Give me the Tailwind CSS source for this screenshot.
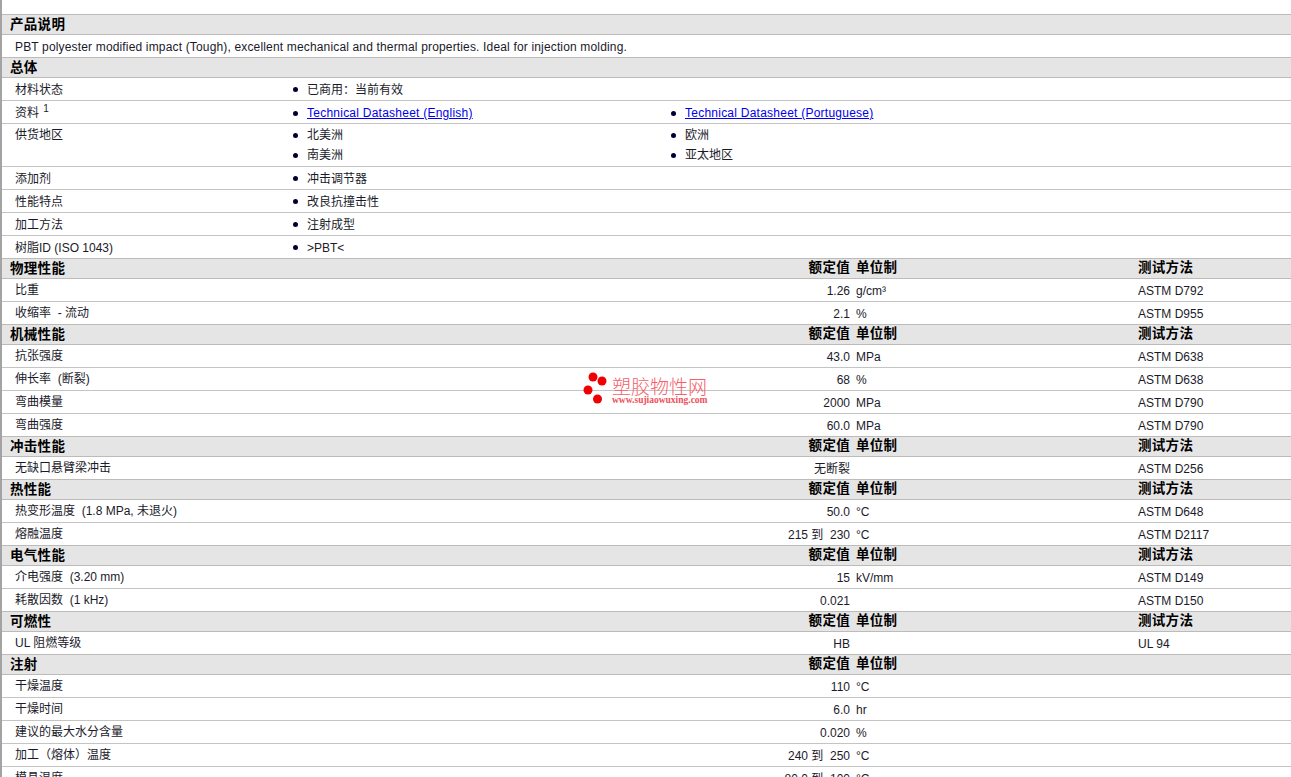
<!DOCTYPE html>
<html lang="zh-CN">
<head>
    <meta charset="UTF-8">
    <script src="https://cdn.jsdelivr.net/npm/@tailwindcss/browser@4"></script>
    <title>产品说明</title>
</head>
<body class="bg-white h-[777px] overflow-hidden relative font-['Liberation_Sans','Noto_Sans_CJK_SC',sans-serif] text-[12px] text-[#1a1a2a]">
    <div id="sheet" class="border-l-2 border-[#a3a3a3] pt-[14px] min-h-[777px]"></div>

    <!-- Watermark -->
    <div class="absolute left-[583px] top-[371px] flex gap-[3px] pointer-events-none">
        <svg width="26" height="34" viewBox="0 0 26 34" class="shrink-0">
            <circle cx="10" cy="6" r="4.5" fill="#f00000"/>
            <circle cx="19" cy="10" r="4.5" fill="#f00000"/>
            <circle cx="5" cy="19" r="4.5" fill="#f00000"/>
            <circle cx="14.5" cy="28" r="4.5" fill="#f00000"/>
        </svg>
        <div class="flex flex-col items-start pt-[5px]">
            <div class="text-[19px] leading-[20px] text-[#f4616a] font-['Noto_Sans_CJK_SC',sans-serif] font-light whitespace-nowrap">塑胶物性网</div>
            <div class="text-[9.5px] leading-[9px] font-bold text-[#f0505a] font-['Liberation_Serif',serif] whitespace-nowrap">www.sujiaowuxing.com</div>
        </div>
    </div>

    <script>
        const TEST = '测试方法';

        // Section header with the grey band
        const head = (title, value, test) => `
            <div class="flex h-[21px] bg-[#e6e5e5] border-t border-b border-[#bdbaba] -mb-px text-[13.5px] tracking-[0.3px] leading-[20px] font-bold text-black">
                <div class="w-[848px] flex justify-between pl-[8px] shrink-0">
                    <span>${title}</span><span class="leading-[18px] ${value ? '' : 'hidden'}">额定值</span>
                </div>
                <div class="w-[288px] pl-[6px] shrink-0 leading-[18px] ${value ? '' : 'hidden'}">单位制</div>
                <div class="leading-[18px] ${test ? '' : 'hidden'}">${TEST}</div>
            </div>`;

        // Plain property row with a value, unit and test method
        const row = (label, value, unit = '', test = '') => `
            <div class="flex h-[23px] border-b border-[#c4c4c4] box-content -mb-px leading-[24px]">
                <div class="w-[848px] flex justify-between pl-[13px] shrink-0">
                    <span>${label}</span><span class="pt-[1px]">${value}</span>
                </div>
                <div class="w-[288px] pl-[6px] shrink-0 pt-[1px]">${unit}</div>
                <div class="pt-[1px]">${test}</div>
            </div>`;

        // Row of bulleted items, up to two columns
        const info = (label, items, pad = 'pt-[2px]') => `
            <div class="flex h-[23px] border-b border-[#c4c4c4] box-content -mb-px">
                <div class="w-[276px] pl-[13px] shrink-0 leading-[26px]">${label}</div>
                <div class="flex items-center w-[378px] shrink-0 pl-[15px] ${pad}"><span class="w-[5px] h-[5px] rounded-full bg-[#000033] mr-[9px]"></span>${items[0]}</div>
                ${items[1] ? `<div class="flex items-center pl-[15px] ${pad}"><span class="w-[5px] h-[5px] rounded-full bg-[#000033] mr-[9px]"></span>${items[1]}</div>` : ''}
            </div>`;

        const link = (text) => `<a href="#" class="text-[#0000ee] underline tracking-[0.24px]">${text}</a>`;

        const area = `
            <div class="flex h-[43px] border-b border-[#c4c4c4] box-content -mb-px leading-[20px]">
                <div class="w-[276px] pl-[13px] pt-[2px] shrink-0">供货地区</div>
                <div class="w-[378px] shrink-0 pl-[15px] pt-[2px]">
                    <div class="flex items-center"><span class="w-[5px] h-[5px] rounded-full bg-[#000033] mr-[9px]"></span>北美洲</div>
                    <div class="flex items-center"><span class="w-[5px] h-[5px] rounded-full bg-[#000033] mr-[9px]"></span>南美洲</div>
                </div>
                <div class="pl-[15px] pt-[2px]">
                    <div class="flex items-center"><span class="w-[5px] h-[5px] rounded-full bg-[#000033] mr-[9px]"></span>欧洲</div>
                    <div class="flex items-center"><span class="w-[5px] h-[5px] rounded-full bg-[#000033] mr-[9px]"></span>亚太地区</div>
                </div>
            </div>`;

        document.getElementById('sheet').innerHTML = [
            head('产品说明'),
            `<div class="h-[23px] border-b border-[#c4c4c4] box-content -mb-px pl-[13px] leading-[26px] tracking-[0.16px]">PBT polyester modified impact (Tough), excellent mechanical and thermal properties. Ideal for injection molding.</div>`,
            head('总体'),
            info('材料状态', ['已商用：当前有效']),
            info('资料 <sup class="text-[10px] ml-[1px]">1</sup>', [link('Technical Datasheet (English)'), link('Technical Datasheet (Portuguese)')], 'pt-[3px]'),
            area,
            info('添加剂', ['冲击调节器']),
            info('性能特点', ['改良抗撞击性']),
            info('加工方法', ['注射成型']),
            info('树脂ID (ISO 1043)', ['&gt;PBT&lt;']),
            head('物理性能', true, true),
            row('比重', '1.26', 'g/cm³', 'ASTM D792'),
            row('收缩率 &nbsp;- 流动', '2.1', '%', 'ASTM D955'),
            head('机械性能', true, true),
            row('抗张强度', '43.0', 'MPa', 'ASTM D638'),
            row('伸长率 &nbsp;(断裂)', '68', '%', 'ASTM D638'),
            row('弯曲模量', '2000', 'MPa', 'ASTM D790'),
            row('弯曲强度', '60.0', 'MPa', 'ASTM D790'),
            head('冲击性能', true, true),
            row('无缺口悬臂梁冲击', '无断裂', '', 'ASTM D256'),
            head('热性能', true, true),
            row('热变形温度 &nbsp;(1.8 MPa, 未退火)', '50.0', '°C', 'ASTM D648'),
            row('熔融温度', '215 到 &nbsp;230', '°C', 'ASTM D2117'),
            head('电气性能', true, true),
            row('介电强度 &nbsp;(3.20 mm)', '15', 'kV/mm', 'ASTM D149'),
            row('耗散因数 &nbsp;(1 kHz)', '0.021', '', 'ASTM D150'),
            head('可燃性', true, true),
            row('UL 阻燃等级', 'HB', '', 'UL 94'),
            head('注射', true, false),
            row('干燥温度', '110', '°C'),
            row('干燥时间', '6.0', 'hr'),
            row('建议的最大水分含量', '0.020', '%'),
            row('加工（熔体）温度', '240 到 &nbsp;250', '°C'),
            row('模具温度', '80.0 到 &nbsp;100', '°C'),
        ].join('');
    </script>
</body>
</html>
